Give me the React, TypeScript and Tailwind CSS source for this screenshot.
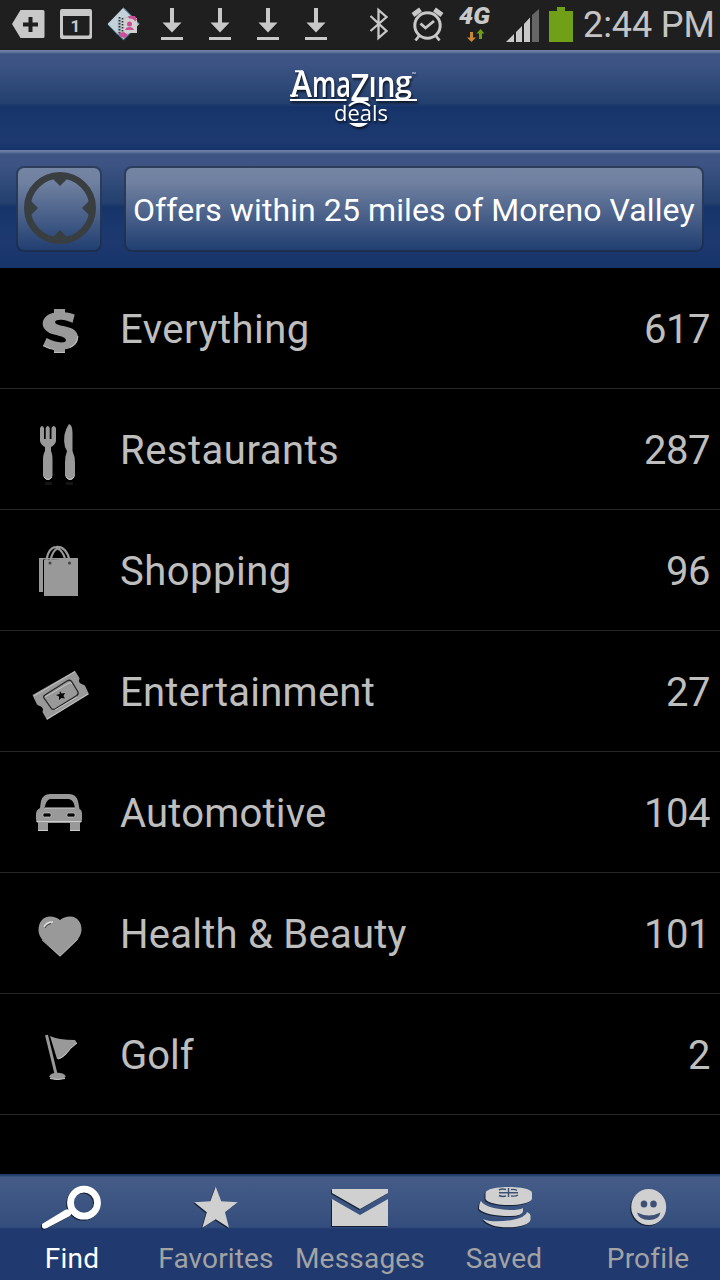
import React from "react";

type IconProps = { box: string; className: string; children: React.ReactNode };

function Icon({ box, className, children }: IconProps) {
  return (
    <svg viewBox={box} className={"block shrink-0 " + className} fill="none" aria-hidden="true">
      {children}
    </svg>
  );
}

function Download() {
  return (
    <Icon box="0 0 48 50" className="h-[50px] w-12">
      <path d="M22 8h4v14.500h7.500L24 32.500l-9.500-10H22zM13 37h22v3H13z" fill="#c8c8c8" />
    </Icon>
  );
}

function StatusBar() {
  return (
    <div className="flex h-[50px] shrink-0 items-center bg-[#1f1f1f]">
      <Icon box="0 0 52 50" className="h-[50px] w-[52px]">
        <path d="M20.500 10H43q1.500 0 1.500 1.500v25q0 1.500-1.500 1.500H20.500L12 24z" fill="#c8c8c8" />
        <path d="M30.500 17v15M23 24.500h15" stroke="#1f1f1f" strokeWidth="4" />
      </Icon>
      <Icon box="52 0 48 50" className="h-[50px] w-12">
        <path d="M62 9h28q2 0 2 2v26q0 2-2 2H62q-2 0-2-2V11q0-2 2-2zm1 7v18q0 1.500 1.500 1.500h23.500q1.500 0 1.500-1.500V16z" fill="#c8c8c8" fillRule="evenodd" />
        <text x="70.500" y="32" fontSize="17" fontWeight="700" fontFamily="Roboto, sans-serif" fill="#c8c8c8">1</text>
      </Icon>
      <Icon box="100 0 48 50" className="h-[50px] w-12">
        <path d="M123.500 7.500 139.500 24l-16 16-16-16z" fill="#adbdc7" />
        <path d="m108 24 15.500-16 8 8-14 3v16z" fill="#c3d2d9" />
        <path d="M108 25l15.500 15 7-7M123.500 8l16 16" stroke="#2f657e" />
        <path d="M121 18h16v15h-16z" fill="#d0d0d0" />
        <path d="M119.500 17v17M122.500 18v15" stroke="#30343a" strokeWidth="1.800" strokeDasharray="1.500 1.500" />
        <circle cx="129.500" cy="24" r="2.500" fill="#c94f99" />
        <path d="M125 30q1-3 4.500-3t4.500 3zM128 16l7 0 2 3.500-2 2q-1-3-6-3zM119 33l5-1 4 3-3 3q-3 0-6-3z" fill="#c94f99" />
      </Icon>
      <Download />
      <Download />
      <Download />
      <Download />
      <Icon box="340 0 64 50" className="h-[50px] w-16">
        <path d="m370.500 16 16 15-8 7V10l8 7-16 14" stroke="#c8c8c8" strokeWidth="2.300" />
      </Icon>
      <Icon box="404 0 48 50" className="h-[50px] w-12">
        <circle cx="427.500" cy="25.500" r="12.700" stroke="#c8c8c8" strokeWidth="3" />
        <path d="m420.500 23.500 5 4.500 8.500-7M419 36l-3.500 4.500M436 36l3.500 4.500" stroke="#c8c8c8" strokeWidth="2.800" />
        <path d="m413 15 7.500-5.500M442 15l-7.500-5.500" stroke="#c8c8c8" strokeWidth="4.800" />
      </Icon>
      <Icon box="452 0 48 50" className="h-[50px] w-12">
        <text x="459" y="24" textLength="31" lengthAdjust="spacingAndGlyphs" fontSize="24" fontWeight="900" fontStyle="italic" fontFamily="Roboto, sans-serif" fill="#c8c8c8">4G</text>
        <path d="M470 32h3v5.500h3l-4.500 4.500-4.500-4.500h3z" fill="#c98637" />
        <path d="M479 39h3v-5.500h2.500l-4-4.500-4 4.500h2.500z" fill="#6f9f12" />
      </Icon>
      <Icon box="500 0 44 50" className="h-[50px] w-11">
        <path d="m506 42 8-8v8zM516 42V32l6-6v16zM524 42V24l6-6.500V42z" fill="#c8c8c8" />
        <path d="M532 42V15l7-6v33z" fill="#666" />
      </Icon>
      <Icon box="544 0 36 50" className="h-[50px] w-9">
        <path d="M549 11h8V7h8v4h8v31h-24z" fill="#709f18" />
      </Icon>
      <span className="ml-[3px] whitespace-nowrap text-[36px] leading-[50px] tracking-[-0.1px] text-[#c4c4c4]">2:44 PM</span>
    </div>
  );
}

function Logo() {
  return (
    <svg viewBox="280 60 150 80" className="block h-20 w-[150px] drop-shadow-[1px_2px_1px_rgba(0,0,0,0.7)]" fill="#fff" fontFamily="'Open Sans', sans-serif">
      <text y="96.500" fontSize="36" fontWeight="600">
        <tspan x="291" textLength="21" lengthAdjust="spacingAndGlyphs">A</tspan>
        <tspan x="312" textLength="39" lengthAdjust="spacingAndGlyphs">ma</tspan>
        <tspan x="350.500" dy="4.500" fontSize="38" textLength="19" lengthAdjust="spacingAndGlyphs">Z</tspan>
        <tspan x="368.500" dy="-4.500" textLength="27" lengthAdjust="spacingAndGlyphs">ın</tspan>
        <tspan x="395" dy="-3.500" fontSize="30" textLength="17" lengthAdjust="spacingAndGlyphs">g</tspan>
        <tspan x="412" dy="-17" fontSize="5">™</tspan>
      </text>
      <path d="M290 99h56.500v2H290zM376 99h41v2h-41zM290 94.500h8v2h-8zM295 70.200h8v2h-8z" />
      <path d="M349 106q10-9 21 0" stroke="#fff" strokeWidth="2.200" fill="none" />
      <text x="334" y="121" fontSize="22" textLength="54" lengthAdjust="spacingAndGlyphs">deals</text>
      <path d="M349 123h19q-9 8-19 0z" />
    </svg>
  );
}

const barSurface =
  "bg-[linear-gradient(to_bottom,#6e80a5_0px,#6277a0_2px,#3e5584_4px,#3c5383_15px,#23406f_53px,#17346a_57px,#1b386f_80px,#1d396f_92px,#17346a_100%)]";

const panel =
  "h-[86px] rounded-lg border-2 border-[#1b2c49]/80 bg-[linear-gradient(to_bottom,#7586a5,#6f80a0_20%,#1f3d70)] bg-origin-border";

function SearchBar() {
  return (
    <div className={"flex h-[118px] shrink-0 gap-[22px] px-4 pt-4 " + barSurface}>
      <button className={"flex w-[86px] items-center justify-center " + panel}>
        <Icon box="22 170 76 76" className="h-[76px] w-[76px]">
          <circle cx="61" cy="207" r="32.700" stroke="#393e41" strokeWidth="6.600" />
          <path d="M50 175h22l-4 3-7 7-7-7zM50 239h22l-4-3-7-7-7 7zM29 196v22l3-4 7-7-7-7zM93 196v22l-3-4-7-7 7-7z" fill="#393e41" />
        </Icon>
      </button>
      <button className={"w-[580px] whitespace-nowrap pt-0.5 pl-[7px] text-left text-[32px] tracking-[0.1px] text-white " + panel}>
        Offers within 25 miles of Moreno Valley
      </button>
    </div>
  );
}

const gray = "#999";

const rows = [
  {
    label: "Everything",
    spacing: "tracking-[0.5px]",
    count: 617,
    art: (
      <>
        <path d="M54 41h11v6H54zM54 79h11v5.500H54z" fill={gray} />
        <path d="M74.700 46.500 72.500 55C68 52 56 50 55 54c0 3.500 12 4 17 6.500 8 4 8 14 1 18-7 4.500-20 4.500-30-.5l3.500-8c7 4 16 5.500 19 3.500 3-5-10-6-16-8.500-8-4-9-12-3-17 6-5 20-5 28-1.500z" fill={gray} />
        <path d="M43 77.500q6 3.500 11 4M54 84.500h11M78 68q-1 8-8 11.500" stroke="#c8c8c8" strokeWidth=".9" />
      </>
    ),
  },
  {
    label: "Restaurants",
    spacing: "tracking-[0.5px]",
    count: 287,
    art: (
      <>
        <path d="M40 39q2-4 4 0v11h1.700V39q2-4 4 0v11h1.800V39q2-4 4.500 0v13q-1 4-5 6v4q1.500 3 1.500 9v16q-4.500 8-9.500 0V71q0-6 2-9v-4q-4-2-5-6z" fill={gray} />
        <path d="M69 35q3.500 1 3.500 9v18q2.500 5 2.500 12v13q-4.500 8-10 0V74q0-7 2-12l-2-4q-3-13 4-23z" fill={gray} />
        <path d="M44 88q4 5 8 0M66 88q4 5 8 0" stroke="#ccc" />
        <path d="M45 94.500h7M66 94.500h7" stroke="#141414" strokeWidth="3" />
      </>
    ),
  },
  {
    label: "Shopping",
    spacing: "tracking-[0.5px]",
    count: 96,
    art: (
      <>
        <path d="M39 48h39v1.500H43V82h-4zM44 50l34-1v37H44z" fill={gray} />
        <path d="M46.500 50q2-12.500 9.500-13 10-1 13.500 13M50.500 50q2.500-10 7-11.500 5 1.500 8 11.500" stroke={gray} strokeWidth="2.200" />
        <circle cx="50" cy="53" r="1.500" fill="#444" />
        <circle cx="69.500" cy="53" r="1.500" fill="#444" />
      </>
    ),
  },
  {
    label: "Entertainment",
    spacing: "tracking-[0.25px]",
    count: 27,
    art: (
      <>
        <path d="M32.500 64 75 39.700l4.500 7.500q-2 5 4 6.500l1.500 1 4 8.500L47 89l-4.500-8q2-5-4-6.500l-1.500-1z" fill={gray} />
        <path d="m34 65 41-24.500M47 88l41-25" stroke="#ccc" strokeWidth=".8" />
        <path d="m45 64 22-14q3-2 5 1l6 10q1 2-2 4L55 78q-3 1-4-1l-7-10q-1-2 1-3z" stroke="#252525" strokeWidth="1.300" />
        <path d="m45 66 24-14q2-1 3 1M55 79l22-13" stroke="#d0d0d0" strokeWidth=".8" />
        <path d="m60 60 1.500 2.500 3.500-.5-1.500 3 1.500 2.500-3.500-.5-2.500 2v-3.500L56 64l3.500-1z" fill="#090909" />
      </>
    ),
  },
  {
    label: "Automotive",
    spacing: "tracking-[0.2px]",
    count: 104,
    art: (
      <>
        <path d="M50 42h19q7 0 9 7l1.500 8q2.500 1 2.500 5v5q0 3-2 4v8H70v-8H48v8H38v-8q-2-1-2-4v-5q0-4 4-6l1-7q2-7 9-7zm0 5q-4 1-5.500 9H75q-1-8-6-9z" fill={gray} fillRule="evenodd" />
        <path d="M36.500 69.500h45M45 56h30M38 78.500h10M70 78.500h10" stroke="#ccc" />
        <rect x="43" y="61" width="8" height="4" rx="1.500" fill="#050505" stroke="#ccc" strokeWidth=".7" />
        <rect x="67" y="61" width="8" height="4" rx="1.500" fill="#050505" stroke="#ccc" strokeWidth=".7" />
      </>
    ),
  },
  {
    label: "Health & Beauty",
    spacing: "tracking-[0.25px]",
    count: 101,
    art: (
      <>
        <path d="M60 47q4-3.500 10-3.500c8 0 12 7 11.500 14q-.5 6-6 11.500L60 83.700 44.500 69q-6-5.500-6-11.500c0-9 5-14 11.500-14q6 0 10 3.500z" fill={gray} />
        <path d="m42 67 18 16 18-17" stroke="#bbb" strokeWidth=".8" />
        <path d="M44 54q2-5 9-5" stroke="#ddd" strokeWidth="1.300" />
        <path d="M45 55q2-4 6-4.500" stroke="#444" />
      </>
    ),
  },
  {
    label: "Golf",
    spacing: "tracking-[0px]",
    count: 2,
    art: (
      <>
        <ellipse cx="57.500" cy="82.300" rx="8" ry="3.500" fill={gray} />
        <path d="m46.500 41 10 41" stroke={gray} strokeWidth="3" />
        <path d="M50 42q8 4 25 4l2 3q-7 5-11 11-4 5-9 5z" fill={gray} />
        <path d="M58 65q4-1 8-5 4-6 11-11M50 84.500q7 2 15 0" stroke="#ccc" />
      </>
    ),
  },
];

const tabs = [
  {
    label: "Find",
    tone: "text-white tracking-[0.3px]",
    box: "0 0 144 58",
    art: (
      <>
        <path d="m42 50 23-14q4-2 7 2-1 4-4 5l-21 11q-4 2-5-1z" fill="#fff" />
        <circle cx="84" cy="28.700" r="13.500" stroke="#fff" strokeWidth="6.800" />
      </>
    ),
  },
  {
    label: "Favorites",
    tone: "text-[#a3a3a3] tracking-[0.15px]",
    box: "144 0 144 58",
    art: <path d="m215.700 12.700 5.500 14.500 16.500 1-12.700 10 4 15.500-13.300-8.500-13.400 8.500 4.500-15.500-12.500-10 16-1z" fill="#d0d0d0" />,
  },
  {
    label: "Messages",
    tone: "text-[#a3a3a3] tracking-[0.2px]",
    box: "288 0 144 58",
    art: <path d="M332 15h56v4l-28 16-28-16zM332 25l28 16 28-16v27h-56z" fill="#d0d0d0" />,
  },
  {
    label: "Saved",
    tone: "text-[#a3a3a3] tracking-[0.2px]",
    box: "432 0 144 58",
    art: (
      <>
        <path d="M485.500 19c0-8 46.500-8 46.500 0v6c-4 8-42 8-46.500 0z" fill="#d0d0d0" />
        <path d="M481 27q5 8 30 9 8 0 12-2v3q0 5-13 5-24 0-31-7 0-6 2-8z" fill="#d0d0d0" />
        <path d="M483 45q8 4 29 1 14-3 15-8 4 2 3.500 4v4q-1 5-15 7-25 2-32.500-8z" fill="#d0d0d0" />
        <path d="M499 16q3-1.500 7-.5M499 18.700h19M499 21.500q3 1.500 7 .5M511 15.500q4-.5 6 1M511 22q5 .5 7-1M508.500 14v9" stroke="#3c5175" strokeWidth="1.500" />
      </>
    ),
  },
  {
    label: "Profile",
    tone: "text-[#a3a3a3] tracking-[0.2px]",
    box: "576 0 144 58",
    art: (
      <>
        <ellipse cx="648.700" cy="33" rx="17.500" ry="18" fill="#d0d0d0" />
        <ellipse cx="644" cy="30" rx="3.300" ry="3.500" fill="#3c5175" />
        <ellipse cx="653.500" cy="30" rx="3.300" ry="3.500" fill="#3c5175" />
        <path d="M637 38.500q12 6 23.500 0-1.500 7.500-11.500 7.500t-12-7.500z" fill="#3c5175" />
      </>
    ),
  },
];

export default function App() {
  return (
    <div className="flex h-[1280px] w-[720px] flex-col overflow-hidden bg-black font-[Roboto,sans-serif]">
      <StatusBar />
      <header className={"flex h-[100px] shrink-0 justify-center pt-2.5 pr-[10px] " + barSurface}>
        <Logo />
      </header>
      <SearchBar />
      <main className="flex-1">
        {rows.map((r) => (
          <div key={r.label} className="flex h-[121px] items-center border-b border-[#262626] pr-[10px] text-[40px] text-[#bebebe]">
            <Icon box="0 0 120 120" className="h-[120px] w-[120px]">{r.art}</Icon>
            <span className={"flex-1 pt-[3px] leading-none " + r.spacing}>{r.label}</span>
            <span className="pt-[3px] leading-none tracking-[-0.5px]">{r.count}</span>
          </div>
        ))}
      </main>
      <nav className="grid h-[106px] shrink-0 grid-cols-5 bg-[linear-gradient(to_bottom,#1d3963_0px,#28466f_2px,#455c87_3px,#344e7d_53px,#203a70_55px,#203a70_100%)]">
        {tabs.map((t) => (
          <button key={t.label} className={"flex flex-col items-center text-[28px] " + t.tone}>
            <Icon box={t.box} className="h-[58px] w-36 drop-shadow-[-1px_1px_0.5px_rgba(0,0,0,0.6)]">{t.art}</Icon>
            <span className="pt-[11px] leading-8">{t.label}</span>
          </button>
        ))}
      </nav>
    </div>
  );
}
